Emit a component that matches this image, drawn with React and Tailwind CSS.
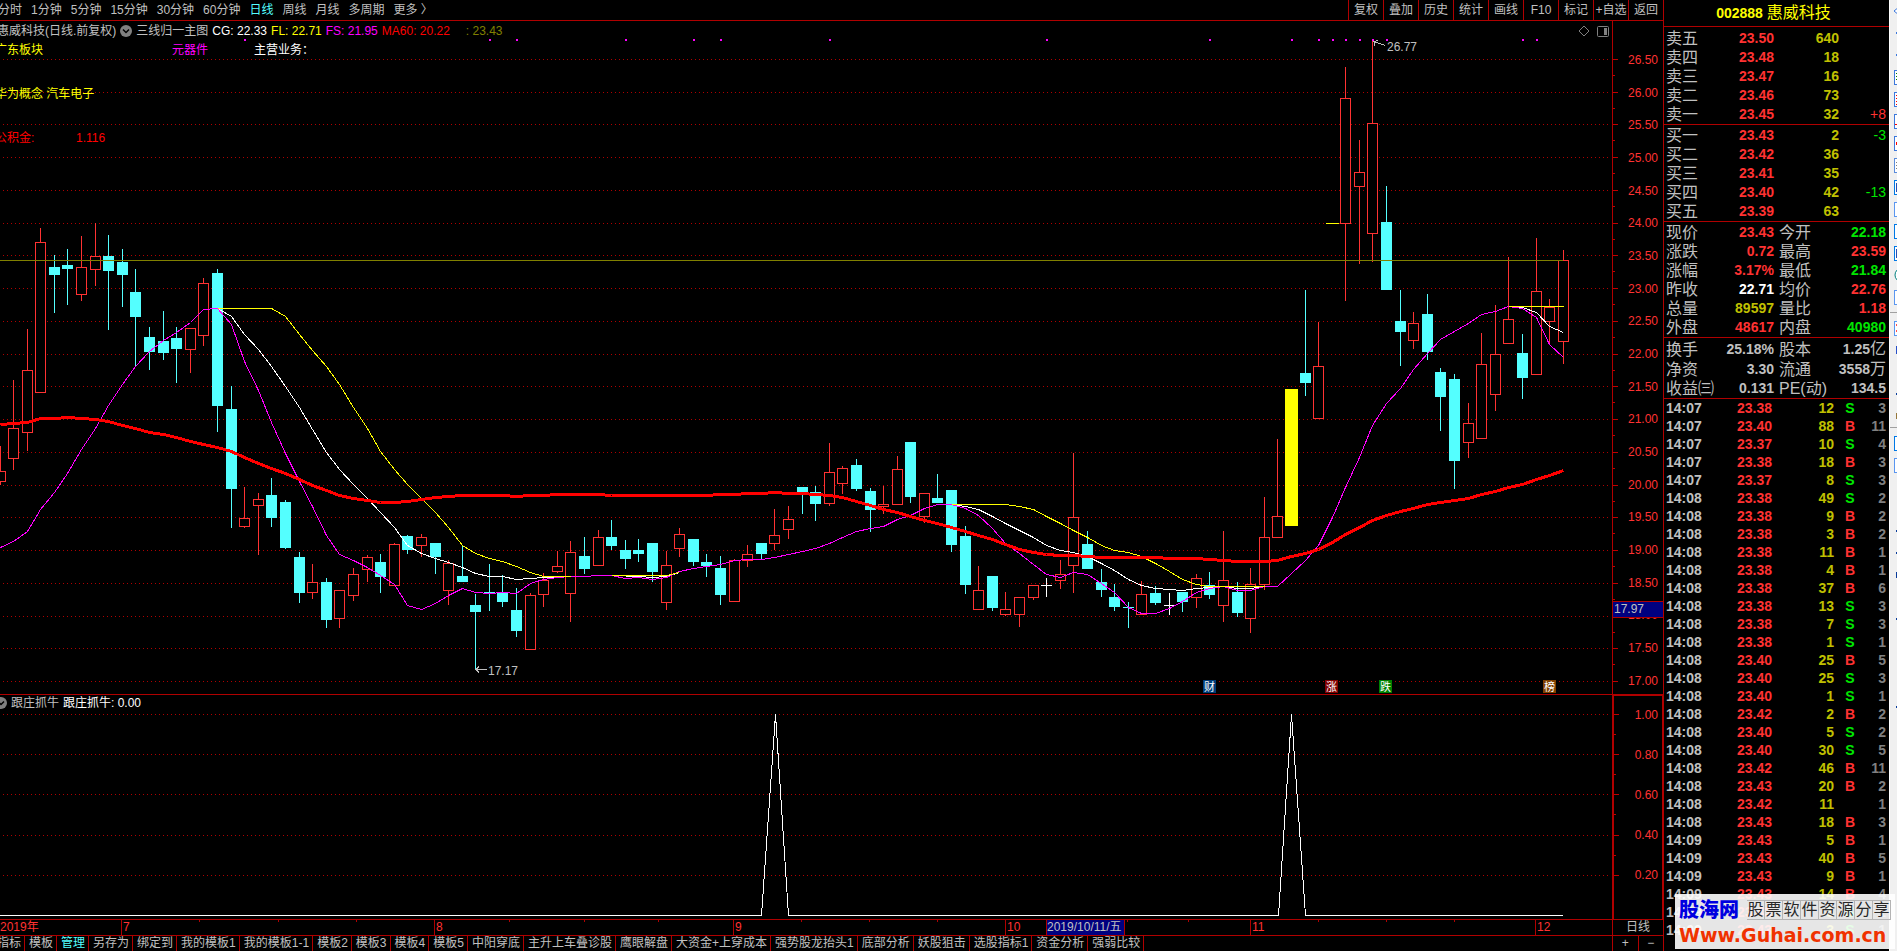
import React from 'react';

const PERIODS = ['分时', '1分钟', '5分钟', '15分钟', '30分钟', '60分钟', '日线', '周线', '月线', '多周期', '更多 〉'];
const TOOLS = ['复权', '叠加', '历史', '统计', '画线', 'F10', '标记', '+自选', '返回'];
const TABS = [
  '指标', '模板', '管理', '另存为', '绑定到', '我的模板1', '我的模板1-1', '模板2', '模板3', '模板4', '模板5',
  '中阳穿底', '主升上车叠诊股', '鹰眼解盘', '大资金+上穿成本', '强势股龙抬头1', '底部分析', '妖股狙击',
  '选股指标1', '资金分析', '强弱比较',
];

const RED = 'text-[#ff3232]';
const GREEN = 'text-[#00e600]';
const YELLOW = 'text-[#c0c000]';
const GREY = 'text-[#c0c0c0]';

const ASKS = [
  ['卖五', '23.50', '640'],
  ['卖四', '23.48', '18'],
  ['卖三', '23.47', '16'],
  ['卖二', '23.46', '73'],
  ['卖一', '23.45', '32', '+8', RED],
];
const BIDS = [
  ['买一', '23.43', '2', '-3', GREEN],
  ['买二', '23.42', '36'],
  ['买三', '23.41', '35'],
  ['买四', '23.40', '42', '-13', GREEN],
  ['买五', '23.39', '63'],
];

const QUOTE = [
  ['现价', '23.43', RED, '今开', '22.18', GREEN],
  ['涨跌', '0.72', RED, '最高', '23.59', RED],
  ['涨幅', '3.17%', RED, '最低', '21.84', GREEN],
  ['昨收', '22.71', 'text-white', '均价', '22.76', RED],
  ['总量', '89597', YELLOW, '量比', '1.18', RED],
  ['外盘', '48617', RED, '内盘', '40980', GREEN],
];
const FINANCE = [
  ['换手', '25.18%', GREY, '股本', '1.25', GREY, '亿'],
  ['净资', '3.30', GREY, '流通', '3558', GREY, '万'],
  ['收益㈢', '0.131', GREY, 'PE(动)', '134.5', GREY],
];

const DEALS = [
  ['14:07', '23.38', 12, 'S', 3],
  ['14:07', '23.40', 88, 'B', 11],
  ['14:07', '23.37', 10, 'S', 4],
  ['14:07', '23.38', 18, 'B', 3],
  ['14:07', '23.37', 8, 'S', 3],
  ['14:08', '23.38', 49, 'S', 2],
  ['14:08', '23.38', 9, 'B', 2],
  ['14:08', '23.38', 3, 'B', 2],
  ['14:08', '23.38', 11, 'B', 1],
  ['14:08', '23.38', 4, 'B', 1],
  ['14:08', '23.38', 37, 'B', 6],
  ['14:08', '23.38', 13, 'S', 3],
  ['14:08', '23.38', 7, 'S', 3],
  ['14:08', '23.38', 1, 'S', 1],
  ['14:08', '23.40', 25, 'B', 5],
  ['14:08', '23.40', 25, 'S', 3],
  ['14:08', '23.40', 1, 'S', 1],
  ['14:08', '23.42', 2, 'B', 2],
  ['14:08', '23.40', 5, 'S', 2],
  ['14:08', '23.40', 30, 'S', 5],
  ['14:08', '23.42', 46, 'B', 11],
  ['14:08', '23.43', 20, 'B', 2],
  ['14:08', '23.42', 11, '', 1],
  ['14:08', '23.43', 18, 'B', 3],
  ['14:09', '23.43', 5, 'B', 1],
  ['14:09', '23.43', 40, 'B', 5],
  ['14:09', '23.43', 9, 'B', 1],
  ['14:09', '23.43', 14, 'B', 4],
  ['14:09', '23.43', 5, 'S', 1],
  ['14:09', '23.43', 3, 'S', 1],
];

// [kind, high, bodyTop, bodyBottom, low] - r: up, c: down, w: flat, y: limit up
const CANDLES = [
  ['r', 446, 471, 481, 485], ['r', 380, 428, 458, 470], ['r', 329, 370, 432, 451], ['r', 228, 242, 392, 392],
  ['c', 255, 267, 275, 313], ['c', 249, 265, 269, 305], ['r', 236, 267, 294, 301], ['r', 223, 256, 269, 286],
  ['c', 235, 256, 271, 330], ['c', 249, 262, 275, 307], ['c', 269, 292, 317, 366], ['c', 327, 337, 352, 370],
  ['c', 311, 341, 353, 360], ['c', 327, 338, 349, 383], ['r', 328, 328, 349, 373], ['r', 278, 283, 335, 346],
  ['c', 269, 273, 406, 432], ['c', 386, 409, 489, 528], ['r', 487, 518, 526, 528], ['r', 493, 499, 505, 555],
  ['c', 478, 495, 518, 527], ['c', 500, 502, 548, 549], ['c', 552, 557, 593, 603], ['r', 564, 582, 592, 599],
  ['c', 578, 582, 620, 628], ['r', 590, 590, 618, 628], ['r', 568, 574, 595, 601], ['r', 555, 557, 569, 582],
  ['c', 554, 562, 577, 593], ['r', 543, 544, 585, 585], ['c', 535, 536, 550, 554], ['r', 534, 537, 545, 557],
  ['c', 543, 543, 557, 574], ['r', 560, 563, 590, 605], ['c', 546, 576, 582, 582], ['c', 594, 605, 612, 670],
  ['c', 564, 592, 593, 611], ['c', 575, 593, 602, 607], ['c', 588, 610, 631, 637], ['r', 593, 595, 649, 649],
  ['r', 573, 580, 594, 607], ['r', 551, 566, 571, 573], ['r', 541, 552, 593, 622], ['c', 537, 556, 569, 574],
  ['r', 530, 537, 565, 565], ['c', 520, 537, 546, 550], ['c', 540, 550, 559, 569], ['c', 539, 550, 554, 562],
  ['c', 543, 543, 572, 582], ['r', 551, 565, 602, 610], ['r', 528, 534, 548, 557], ['c', 539, 539, 562, 566],
  ['c', 554, 562, 566, 577], ['c', 556, 568, 595, 605], ['r', 559, 560, 601, 601], ['r', 545, 554, 560, 567],
  ['c', 543, 543, 554, 559], ['r', 509, 535, 543, 550], ['r', 506, 519, 529, 539], ['c', 487, 487, 492, 514],
  ['c', 486, 492, 504, 521], ['r', 443, 472, 503, 506], ['r', 466, 468, 483, 494], ['c', 459, 465, 489, 491],
  ['c', 488, 491, 510, 532], ['r', 486, 504, 506, 514], ['r', 456, 469, 504, 504], ['c', 442, 442, 497, 503],
  ['r', 493, 493, 516, 523], ['c', 474, 498, 503, 503], ['c', 490, 490, 545, 552], ['c', 526, 536, 585, 594],
  ['r', 566, 590, 609, 609], ['c', 576, 576, 608, 611], ['r', 592, 609, 614, 616], ['r', 597, 597, 614, 627],
  ['r', 585, 585, 597, 600], ['w', 578, 585, 586, 597], ['r', 560, 574, 580, 589], ['r', 453, 517, 565, 593],
  ['c', 531, 544, 569, 569], ['c', 569, 582, 590, 597], ['c', 584, 597, 607, 611], ['c', 602, 607, 608, 628],
  ['r', 581, 594, 614, 614], ['c', 586, 593, 603, 605], ['w', 593, 605, 606, 615], ['c', 592, 592, 602, 612],
  ['r', 574, 578, 597, 608], ['c', 572, 585, 595, 599], ['r', 531, 580, 605, 622], ['c', 582, 592, 613, 617],
  ['r', 568, 584, 618, 633], ['r', 497, 537, 584, 590], ['r', 439, 516, 537, 537], ['y', 389, 389, 526, 526],
  ['c', 290, 373, 383, 396], ['r', 322, 366, 418, 418], ['y', 223, 223, 224, 224], ['r', 67, 98, 223, 301],
  ['r', 140, 172, 186, 264], ['r', 40, 123, 233, 262], ['c', 186, 222, 290, 290], ['c', 290, 321, 332, 366],
  ['r', 312, 323, 340, 349], ['c', 294, 314, 352, 360], ['c', 368, 372, 397, 431], ['c', 374, 379, 461, 489],
  ['r', 403, 423, 442, 458], ['r', 333, 364, 438, 438], ['r', 305, 354, 394, 411], ['r', 257, 319, 343, 343],
  ['c', 334, 353, 378, 399], ['r', 238, 291, 374, 374], ['r', 299, 307, 321, 343], ['r', 250, 260, 341, 364],
];

// moving averages, one value a day from the given first day
const FS = [
  547, 541, 531, 509, 492, 473, 449, 428, 405, 384, 366, 351, 340, 332, 322, 309, 308, 324, 361, 390, 422, 453, 481,
  506, 535, 554, 560, 567, 575, 584, 605, 609, 603, 595, 588, 592, 593, 592, 593, 583, 579, 577, 576, 576, 575, 575,
  578, 577, 579, 577, 571, 568, 566, 564, 560, 559, 559, 557, 554, 551, 548, 543, 537, 531, 528, 526, 519, 515, 508,
  504, 504, 508, 515, 528, 543, 553, 564, 574, 577, 572, 574, 583, 592, 607, 613, 613, 608, 601, 592, 588, 586, 590,
  590, 586, 586, 573, 560, 545, 517, 487, 457, 425, 403, 388, 369, 353, 339, 331, 323, 314, 311, 306, 308, 317, 344,
  357,
];
const MA60 = [
  424, 423, 422, 418, 418, 417, 418, 419, 421, 425, 428, 432, 434, 437, 441, 444, 447, 451, 457, 463, 468, 473, 479,
  485, 490, 495, 498, 500, 502, 502, 501, 499, 497, 496, 495, 495, 495, 495, 496, 495, 495, 494, 494, 494, 494, 495,
  495, 495, 495, 495, 495, 495, 495, 494, 494, 493, 493, 492, 493, 493, 494, 495, 497, 501, 505, 509, 512, 516, 520,
  523, 527, 531, 535, 539, 544, 549, 552, 554, 555, 555, 556, 557, 557, 557, 557, 557, 558, 558, 558, 559, 560, 561,
  561, 561, 560, 556, 553, 549, 542, 534, 527, 520, 515, 511, 508, 504, 502, 500, 498, 494, 491, 487, 484, 479, 475,
  470,
];
const CG = [
  [16, [308, 316, 334, 349, 366, 386, 407, 429, 452, 469, 484, 498, 512, 527, 545, 553, 558, 562, 567, 573, 576, 576, 579, 578, 577, 577]],
  [46, [576, 576, 577, 576, 572]],
  [70, [504, 506, 509, 516, 523, 530, 537, 545, 550, 552, 556, 563, 570, 579, 585, 588, 589, 590, 588, 587, 586, 588, 588, 586]],
  [111, [306, 307, 312, 326, 332]],
];
const FL = [
  [16, [308, 308, 308, 308, 308, 316, 334, 350, 366, 384, 407, 428, 451, 469, 484, 498, 512, 527, 545, 553, 558, 561, 566, 572, 576, 576, 576]],
  [45, [575, 575, 575, 575, 575, 572]],
  [70, [504, 504, 504, 504, 504, 506, 509, 516, 523, 530, 537, 545, 550, 552, 556, 563, 571, 579, 584, 586, 586, 586, 586, 586]],
  [111, [306, 306, 306, 306, 306]],
];

const SIGNAL_DAYS = [18, 36, 38, 46, 51, 53, 61, 77, 89, 95, 97, 98, 99, 100, 101, 102, 112, 113];
const BADGES = [
  [1203, '财', '#003c78'],
  [1325, '涨', '#800000'],
  [1379, '跌', '#008000'],
  [1543, '榜', '#804000'],
];

const PRICE_ROWS = Array.from({ length: 20 }, (_, i) => 59 + Math.round(i * 32.74));
const LEVEL_ROWS = [714, 754, 794, 835, 875];

const dayX = (i) => Math.floor(i * 13.594);
const toPoints = (first, ys) => ys.map((y, i) => `${dayX(first + i) + 0.5},${y + 0.5}`).join(' ');

const CANDLE_COLORS = { r: '#ff3232', c: '#54ffff', w: '#ffffff', y: '#ffff00' };

function Candle({ day, data }) {
  const [kind, high, top, bottom, low] = data;
  const x = dayX(day);
  const color = CANDLE_COLORS[kind];
  if (kind === 'y') {
    return <rect x={x - 6} y={top} width="13" height={bottom - top} fill={color} />;
  }
  return (
    <g>
      <rect x={x} y={high} width="1" height={low - high} fill={color} />
      {kind === 'r' ? (
        <rect x={x - 4.5} y={top + 0.5} width="10" height={bottom - top} fill="#000" stroke={color} />
      ) : (
        <rect x={x - 5} y={top} width="11" height={bottom - top} fill={color} />
      )}
    </g>
  );
}

function PriceChart() {
  return (
    <svg viewBox="0 21 1612 673" preserveAspectRatio="none" className="block h-full w-full" shapeRendering="crispEdges">
      {PRICE_ROWS.map((y) => (
        <line key={y} x1="3" x2="1609" y1={y + 0.5} y2={y + 0.5} stroke="#b00000" strokeDasharray="1 3" />
      ))}
      {CANDLES.map((c, i) => (
        <Candle key={i} day={i} data={c} />
      ))}
      <line x1="0" x2="1563" y1="260.5" y2="260.5" stroke="#808000" />
      <g fill="none">
        {CG.map(([first, ys]) => (
          <polyline key={first} points={toPoints(first, ys)} stroke="#ffffff" />
        ))}
        <polyline points={toPoints(0, FS)} stroke="#ff00ff" />
        {FL.map(([first, ys]) => (
          <polyline key={first} points={toPoints(first, ys)} stroke="#ffff00" />
        ))}
        <polyline points={toPoints(0, MA60)} stroke="#ff0000" strokeWidth="3" />
      </g>
      {SIGNAL_DAYS.map((d) => (
        <rect key={d} x={dayX(d)} y="39" width="2" height="2" fill="#ff00ff" />
      ))}

      <g stroke="#c0c0c0" fill="none">
        <path d="M476 669.5h11M479 666.5l-3 3l3 3" />
        <path d="M1374 41.5l11 4M1378 40.5l-4 1l1 4" />
      </g>
      <g fill="#c0c0c0" fontSize="12">
        <text x="488" y="675">17.17</text>
        <text x="1387" y="51">26.77</text>
      </g>
      {BADGES.map(([x, label, color]) => (
        <g key={label}>
          <rect x={x} y="680" width="13" height="13" fill={color} />
          <text x={x + 1} y="691" fontSize="11" fill="#fff">{label}</text>
        </g>
      ))}
    </svg>
  );
}

function SignalChart() {
  return (
    <svg viewBox="0 695 1612 224" preserveAspectRatio="none" className="block h-full w-full" shapeRendering="crispEdges">
      {LEVEL_ROWS.map((y) => (
        <line key={y} x1="3" x2="1609" y1={y + 0.5} y2={y + 0.5} stroke="#b00000" strokeDasharray="1 3" />
      ))}
      <polyline
        points="0,915.5 761.5,915.5 775.5,714.5 788.5,915.5 1278.5,915.5 1291.5,714.5 1305.5,915.5 1563,915.5"
        fill="none"
        stroke="#fff"
      />
    </svg>
  );
}

function AxisTicks({ rows, viewBox }) {
  const half = (rows[1] - rows[0]) / 2;
  return (
    <svg viewBox={viewBox} preserveAspectRatio="none" className="absolute inset-0 h-full w-full" shapeRendering="crispEdges">
      {rows.map((y, i) => (
        <g key={y} fill="#c00000">
          <rect x="0" y={y} width="5" height="1" />
          {i < rows.length - 1 && <rect x="0" y={Math.floor(y + half)} width="2" height="1" />}
        </g>
      ))}
    </svg>
  );
}

function FoldIcon() {
  return (
    <svg width="12" height="12" viewBox="0 0 12 12" className="shrink-0">
      <circle cx="6" cy="6" r="6" fill="#808080" />
      <path d="M3 4.5L6 7.5L9 4.5" fill="none" stroke="#000" strokeWidth="1.5" />
    </svg>
  );
}

function OrderTable({ rows }) {
  return (
    <table className="w-full table-fixed border-b border-[#b00000]">
      <colgroup>
        <col className="w-[50px]" />
        <col className="w-[60px]" />
        <col className="w-[65px]" />
        <col />
      </colgroup>
      <tbody>
        {rows.map(([name, price, vol, diff, tone]) => (
          <tr key={name} className="h-[19px] text-right text-sm/[19px] font-bold">
            <th className="pl-0.5 text-left text-base/[19px] font-normal text-[#c0c0c0]">{name}</th>
            <td className="text-[#ff3232]">{price}</td>
            <td className="text-[#c0c000]">{vol}</td>
            <td className={`pr-[3px] font-normal ${tone || ''}`}>{diff}</td>
          </tr>
        ))}
      </tbody>
    </table>
  );
}

function QuoteTable({ rows }) {
  return (
    <table className="w-full table-fixed border-b border-[#b00000]">
      <colgroup>
        <col className="w-[50px]" />
        <col className="w-[60px]" />
        <col className="w-[50px]" />
        <col />
      </colgroup>
      <tbody>
        {rows.map(([n1, v1, t1, n2, v2, t2, unit]) => (
          <tr key={n1} className="h-[19px] whitespace-nowrap text-right text-sm/[19px] font-bold">
            <th className="pl-0.5 text-left text-base/[19px] font-normal text-[#c0c0c0]">{n1}</th>
            <td className={t1}>{v1}</td>
            <th className="pl-[5px] text-left text-base/[19px] font-normal text-[#c0c0c0]">{n2}</th>
            <td className={`pr-[3px] ${t2}`}>
              {v2}
              {unit && <span className="text-base/[19px] font-normal">{unit}</span>}
            </td>
          </tr>
        ))}
      </tbody>
    </table>
  );
}

function QuotePanel() {
  return (
    <aside className="w-[226px] shrink-0 overflow-hidden border-l border-[#b00000]">
      <h1 className="flex h-[27px] items-center justify-center gap-1 border-b border-[#b00000] pr-1.5 text-base font-normal text-[#ffff00]">
        <span className="text-sm font-bold">002888</span>惠威科技
      </h1>
      <div className="pt-[2px]">
        <OrderTable rows={ASKS} />
      </div>
      <div className="pt-px">
        <OrderTable rows={BIDS} />
      </div>
      <div className="pt-px">
        <QuoteTable rows={QUOTE} />
      </div>
      <div className="pt-px">
        <QuoteTable rows={FINANCE} />
      </div>
      <table className="w-full table-fixed">
        <colgroup>
          <col className="w-12" />
          <col className="w-[60px]" />
          <col className="w-[62px]" />
          <col className="w-8" />
          <col />
        </colgroup>
        <tbody>
          {DEALS.map(([time, price, vol, side, count], i) => (
            <tr key={i} className="h-[18px] text-right text-sm/[18px] font-bold">
              <td className="pl-0.5 text-left text-[#c0c0c0]">{time}</td>
              <td className="text-[#ff3232]">{price}</td>
              <td className="text-[#c0c000]">{vol}</td>
              <td className={`text-center ${side === 'S' ? GREEN : RED}`}>{side}</td>
              <td className="pr-[3px] text-[#808080]">{count}</td>
            </tr>
          ))}
        </tbody>
      </table>
    </aside>
  );
}

function BoxIcon({ stroke, children }) {
  return (
    <svg width="16" height="16" viewBox="0 0 16 16" className="shrink-0" shapeRendering="crispEdges">
      <rect x="0.5" y="1.5" width="15" height="14" fill="#fff" stroke={stroke} />
      {children}
    </svg>
  );
}

function Dash({ color = '#0a3c9b', height = 2 }) {
  return (
    <svg width="16" height="16" viewBox="0 0 16 16" className="shrink-0" shapeRendering="crispEdges">
      <rect x="2" y={8 - height / 2} width="12" height={height} fill={color} />
    </svg>
  );
}

const SIDE_GROUPS = [
  [
    <svg key="d" width="16" height="16" viewBox="0 0 16 16" className="shrink-0"><path d="M0 8l5-4h6l5 4l-5 4H5z" fill="#fff" stroke="#3c78dc" /></svg>,
    <Dash key="1" color="#3c78dc" />,
    <Dash key="2" color="#3c78dc" />,
    <BoxIcon key="3" stroke="#3c78dc"><path d="M2 4h12M2 7h12M2 10h12" stroke="#008000" /></BoxIcon>,
    <BoxIcon key="4" stroke="#3c78dc"><path d="M2 4h12M2 7h12M2 10h12M2 13h12" stroke="#ff0000" /></BoxIcon>,
    <BoxIcon key="5" stroke="#3c78dc"><path d="M1 11h5l3-5" stroke="#ff0000" fill="none" /></BoxIcon>,
    <BoxIcon key="6" stroke="#3c78dc"><rect x="2" y="7" width="6" height="3" fill="#ff0000" /></BoxIcon>,
    <BoxIcon key="7" stroke="#5a8cdc"><path d="M2 5h12M2 8h12M2 11h12" stroke="#808080" /></BoxIcon>,
    <BoxIcon key="8" stroke="#0078e6"><rect x="2" y="4" width="6" height="9" fill="#2850b4" /></BoxIcon>,
    <BoxIcon key="9" stroke="#5a96f0" />,
    <BoxIcon key="10" stroke="#0078e6" />,
    <BoxIcon key="11" stroke="#0078e6"><rect x="2" y="4" width="6" height="9" fill="#2850b4" /></BoxIcon>,
    <svg key="12" width="16" height="16" viewBox="0 0 16 16" className="shrink-0"><circle cx="8" cy="8" r="7" fill="#fff" stroke="#008080" /></svg>,
    <BoxIcon key="13" stroke="#5a96f0" />,
  ],
  [
    <BoxIcon key="1" stroke="#5a96f0"><rect x="2" y="4" width="4" height="2" fill="#ff5050" /><rect x="2" y="10" width="4" height="2" fill="#ff5050" /></BoxIcon>,
    <Dash key="2" color="#2850c8" height={8} />,
    null,
    <Dash key="4" />,
    <Dash key="5" color="#96783c" height={6} />,
  ],
  [
    <BoxIcon key="1" stroke="#0078e6" />,
    <BoxIcon key="2" stroke="#5a96f0" />,
    null,
    null,
    <Dash key="5" />,
    <Dash key="6" />,
    <Dash key="7" height={6} />,
    null,
    <Dash key="9" />,
    null,
    null,
    null,
    <Dash key="13" />,
  ],
];

function SideBar() {
  return (
    <div className="flex w-2 shrink-0 flex-col overflow-hidden border-l border-white bg-[#f0f0f0]">
      {SIDE_GROUPS.map((group, g) => (
        <div key={g} className={g ? 'border-t border-[#a0a0a0] pt-1' : 'pb-1'}>
          {group.map((icon, i) => (
            <button key={i} type="button" aria-label={`工具${g}-${i}`} className="flex h-[22px] w-full items-center overflow-hidden pl-1">
              {icon}
            </button>
          ))}
        </div>
      ))}
    </div>
  );
}

export default function App() {
  return (
    <div className="relative flex h-screen overflow-hidden bg-black font-['Liberation_Sans','Noto_Sans_CJK_SC',sans-serif] text-xs text-[#c0c0c0]">
      <main className="flex min-w-0 flex-1 flex-col">
        <nav className="flex h-[21px] shrink-0 justify-between overflow-hidden border-b border-[#b00000]">
          <div className="-ml-0.5 flex items-center gap-[9px] whitespace-nowrap">
            {PERIODS.map((p) => (
              <button key={p} type="button" className={p === '日线' ? 'text-[#54ffff]' : ''}>{p}</button>
            ))}
          </div>
          <div className="flex">
            {TOOLS.map((t) => (
              <button key={t} type="button" className="w-[35px] whitespace-nowrap border-l border-[#b00000]">{t}</button>
            ))}
          </div>
        </nav>

        <section className="flex min-h-0 flex-1 border-b border-[#b00000]">
          <div className="relative min-w-0 flex-1">
            <PriceChart />
            <div className="absolute inset-x-0 top-0">
              <div className="-ml-[3px] flex h-[19px] items-center gap-1 whitespace-nowrap">
                <span>惠威科技(日线.前复权)</span>
                <FoldIcon />
                <span>三线归一主图</span>
                <span className="text-white">CG: 22.33</span>
                <span className="text-[#ffff00]">FL: 22.71</span>
                <span className="text-[#ff00ff]">FS: 21.95</span>
                <span className="text-[#ff0000]">MA60: 20.22</span>
                <span className="ml-3 text-[#808000]">: 23.43</span>
                <svg width="32" height="12" viewBox="0 0 32 12" className="ml-auto mr-[3px]" fill="none" stroke="#808080">
                  <path d="M7 1l5 5l-5 5l-5-5z" />
                  <rect x="20.5" y="1.5" width="11" height="10" rx="1" />
                  <rect x="27" y="3" width="3" height="7" fill="#808080" stroke="none" />
                </svg>
              </div>
              <div className="-ml-[5px] flex h-5 items-center whitespace-nowrap text-[#ffff00]">
                <span className="w-[177px]">广东板块</span>
                <span className="w-[82px] text-[#ff00ff]">元器件</span>
                <span className="text-white">主营业务：</span>
              </div>
              <p className="-ml-[5px] mt-6 h-5 text-xs/[20px] text-[#ffff00]">华为概念 汽车电子</p>
              <p className="-ml-[5px] mt-6 flex h-5 text-xs/[20px] text-[#ff0000]">
                <span className="w-[81px]">公积金:</span>
                <span>1.116</span>
              </p>
            </div>
          </div>
          <div className="relative w-[51px] shrink-0 border-l border-[#b00000]">
            <AxisTicks rows={PRICE_ROWS} viewBox="0 21 50 673" />
            <ul className="flex h-full flex-col justify-between pb-[5px] pr-[5px] pt-[31px] text-right text-xs/[16px] text-[#ff3232]">
              {PRICE_ROWS.map((y, i) => (
                <li key={y}>{(26.5 - i * 0.5).toFixed(2)}</li>
              ))}
            </ul>
            <div className="absolute inset-x-0 top-[580px] h-[17px] border-y border-[#b00000] bg-[#000080] pl-px text-xs/[15px]">17.97</div>
          </div>
        </section>

        <section className="flex h-[224px] shrink-0">
          <div className="relative min-w-0 flex-1">
            <SignalChart />
            <div className="absolute left-0 top-0 -ml-[5px] flex h-4 items-center gap-1 whitespace-nowrap">
              <FoldIcon />
              <span>跟庄抓牛</span>
              <span className="text-white">跟庄抓牛: 0.00</span>
            </div>
          </div>
          <div className="relative w-[51px] shrink-0 border-l-2 border-r border-t border-[#b00000]">
            <AxisTicks rows={LEVEL_ROWS} viewBox="0 696 49 223" />
            <ul className="flex h-full flex-col justify-between pb-9 pr-1 pt-[11px] text-right text-xs/[16px] text-[#ff3232]">
              {['1.00', '0.80', '0.60', '0.40', '0.20'].map((v) => (
                <li key={v}>{v}</li>
              ))}
            </ul>
          </div>
        </section>

        <div className="flex h-4 shrink-0 border-t border-[#b00000] text-xs/[15px]">
          <div className="relative flex min-w-0 flex-1 text-[#ff3232]">
            <span className="w-[121px]">2019年</span>
            <span className="w-[313px] border-l border-[#b00000] pl-px">7</span>
            <span className="w-[299px] border-l border-[#b00000] pl-px">8</span>
            <span className="w-[272px] border-l border-[#b00000] pl-px">9</span>
            <span className="w-[245px] border-l border-[#b00000] pl-px">10</span>
            <span className="w-[285px] border-l border-[#b00000] pl-px">11</span>
            <span className="border-l border-[#b00000] pl-px">12</span>
            <svg viewBox="0 0 1612 15" preserveAspectRatio="none" className="absolute inset-0 h-full w-full" shapeRendering="crispEdges">
              {[199, 278, 356, 509, 584, 658, 801, 869, 937, 1127, 1188, 1318, 1386, 1454].map((x) => (
                <rect key={x} x={x} y="0" width="1" height="2" fill="#b00000" />
              ))}
            </svg>
            <span className="absolute inset-y-0 left-[1046px] w-[79px] whitespace-nowrap border-x border-[#b00000] bg-[#000080] text-[#c0c0c0]">2019/10/11/五</span>
          </div>
          <button type="button" className="w-[51px] border-l border-[#b00000]">日线</button>
        </div>

        <div className="flex h-4 shrink-0 justify-between border-t border-[#b00000] text-xs/[15px]">
          <div className="-ml-[7px] flex min-w-0 overflow-hidden">
            {TABS.map((t) => (
              <button
                key={t}
                type="button"
                className={`whitespace-nowrap border-r border-[#b00000] pl-1 pr-[3px] ${t === '管理' ? 'text-[#54ffff]' : ''}`}
              >
                {t}
              </button>
            ))}
          </div>
          <div className="flex w-[51px] shrink-0">
            <button type="button" className="flex-1 border-l border-[#b00000]">+</button>
            <button type="button" className="flex-1 border-l border-[#b00000]">−</button>
          </div>
        </div>
      </main>

      <QuotePanel />
      <SideBar />

      {/* site mark */}
      <div className="absolute bottom-0.5 right-0.5 h-[55px] w-[220px] overflow-hidden bg-white/90 px-1">
        <div className="flex h-8 items-center justify-between whitespace-nowrap">
          <span className="text-xl/[32px] font-black text-[#0000e0]">股海网</span>
          <span className="flex text-base/[18px] text-[#282828]">
            {'股票软件资源分享'.split('').map((c) => (
              <span key={c} className="w-[18px] border-y border-r border-[#b4b4b4] text-center">{c}</span>
            ))}
          </span>
        </div>
        <a href="#guhai" className="block whitespace-nowrap font-['DejaVu_Sans'] text-[19px]/[18px] font-bold text-[#f03200]">Www.Guhai.com.cn</a>
      </div>
    </div>
  );
}
